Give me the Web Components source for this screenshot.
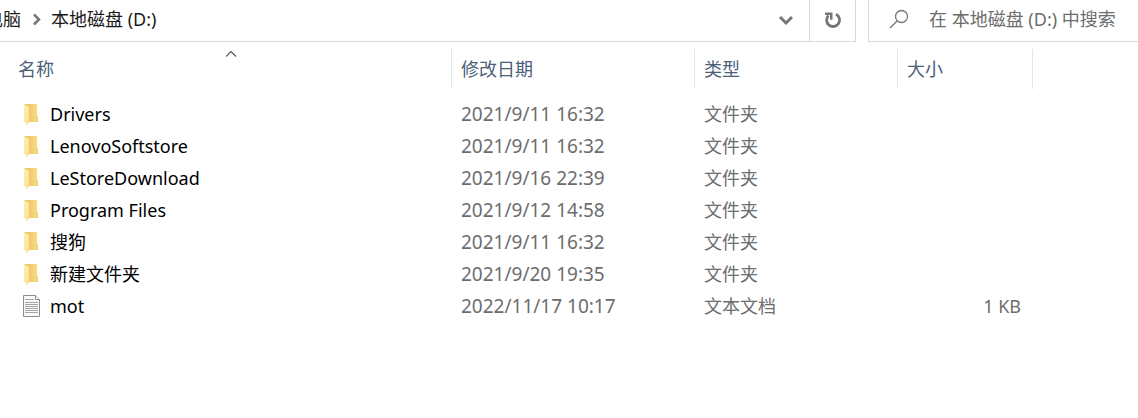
<!DOCTYPE html>
<html lang="zh-CN">
<head>
<meta charset="utf-8">
<meta name="viewport" content="width=device-width, initial-scale=1">
<title>本地磁盘 (D:)</title>
<style>
  body {
    margin: 0;
    background: #fff;
    color: #000;
    font: 18px/32px "Noto Sans", "Noto Sans CJK SC", sans-serif;
  }
</style>
</head>
<body>
<explorer-window>
  <address-bar slot="address" parent="电脑" current="本地磁盘 (D:)"></address-bar>
  <search-box slot="search" hint="在 本地磁盘 (D:) 中搜索"></search-box>
  <file-list></file-list>
</explorer-window>

<script>
(() => {
  'use strict';

  const ICONS = {
    folder: `
      <svg width="20" height="24" viewBox="0 0 20 24" aria-hidden="true">
        <defs>
          <linearGradient id="back" x1="0" x2="1">
            <stop offset=".3" stop-color="#ecc768"/><stop offset="1" stop-color="#fbdf8a"/>
          </linearGradient>
          <linearGradient id="front" x1="0" x2="1" y1="0" y2="1">
            <stop offset="0" stop-color="#ffeebb"/><stop offset="1" stop-color="#fddf8b"/>
          </linearGradient>
        </defs>
        <path d="M2 2h13v11l1 1v6H2z" fill="url(#back)"/>
        <path d="M14 14h2v6h-2z" fill="#f6d178"/>
        <path d="M2 2l5 3v14l-1 4-4-3z" fill="url(#front)"/>
      </svg>`,
    text: `
      <svg width="20" height="24" viewBox="0 0 20 24" aria-hidden="true">
        <path d="M1.500 1.500h12l4 4v17h-16z" fill="#fafafa" stroke="#8c8c8c"/>
        <path d="M13.500 1.500v4h4" fill="#fff" stroke="#8c8c8c"/>
        <path d="M3 5.500h9M3 8.500h13M3 10.500h13M3 12.500h13M3 14.500h13M3 16.500h13M3 18.500h13" stroke="#a3a3a3"/>
      </svg>`
  };

  const FILES = [
    { name: 'Drivers', date: '2021/9/11 16:32', type: '文件夹', size: '', icon: 'folder' },
    { name: 'LenovoSoftstore', date: '2021/9/11 16:32', type: '文件夹', size: '', icon: 'folder' },
    { name: 'LeStoreDownload', date: '2021/9/16 22:39', type: '文件夹', size: '', icon: 'folder' },
    { name: 'Program Files', date: '2021/9/12 14:58', type: '文件夹', size: '', icon: 'folder' },
    { name: '搜狗', date: '2021/9/11 16:32', type: '文件夹', size: '', icon: 'folder' },
    { name: '新建文件夹', date: '2021/9/20 19:35', type: '文件夹', size: '', icon: 'folder' },
    { name: 'mot', date: '2022/11/17 10:17', type: '文本文档', size: '1 KB', icon: 'text' }
  ];

  // ---------- Window frame ----------
  class ExplorerWindow extends HTMLElement {
    constructor() {
      super();
      this.attachShadow({ mode: 'open' }).innerHTML = `
        <style>
          :host { display: block; overflow: hidden; }
          header { display: flex; gap: 12px; }
          slot[name="address"]::slotted(*) { flex: 1; min-width: 0; }
          slot[name="search"]::slotted(*) { flex: 0 0 270px; min-width: 0; }
          main { overflow-x: auto; padding-top: 7px; }
        </style>
        <header>
          <slot name="address"></slot>
          <slot name="search"></slot>
        </header>
        <main><slot></slot></main>
      `;
    }
  }

  // ---------- Address bar ----------
  class AddressBar extends HTMLElement {
    constructor() {
      super();
      this.attachShadow({ mode: 'open' });
    }

    connectedCallback() {
      this.shadowRoot.innerHTML = `
        <style>
          :host {
            display: flex; box-sizing: border-box; height: 42px;
            border-bottom: 1px solid #d9d9d9; border-right: 1px solid #d9d9d9;
          }
          nav {
            flex: 1; min-width: 0; display: flex; align-items: center;
            overflow: hidden; white-space: nowrap; padding-bottom: 4px;
          }
          a { color: #1a1a1a; text-decoration: none; }
          a:first-child { margin-left: -15px; }
          nav svg { flex: none; margin: 0 8px; }
          button {
            display: grid; place-items: center; width: 46px; padding: 0 0 2px;
            border: 0; background: none; color: #767676;
          }
          button:last-child { border-left: 1px solid #d9d9d9; }
          button:hover { background-color: #e5f3ff; }
        </style>
        <nav aria-label="路径">
          <a href="#parent">${this.getAttribute('parent')}</a>
          <svg width="14" height="14" viewBox="0 0 14 14" fill="none" stroke="#767676" stroke-width="2.500" aria-hidden="true"><path d="M5 2.500l5 5-5 5"/></svg>
          <a href="#current">${this.getAttribute('current')}</a>
        </nav>
        <button type="button" aria-label="历史记录">
          <svg width="16" height="16" viewBox="0 0 16 16" fill="none" stroke="currentColor" stroke-width="3" aria-hidden="true"><path d="M2 5l6 6 6-6"/></svg>
        </button>
        <button type="button" aria-label="刷新">
          <svg width="18" height="18" viewBox="0 0 18 18" aria-hidden="true">
            <path d="M12 3.200A6.500 6.500 0 1 1 4.500 4.400" fill="none" stroke="currentColor" stroke-width="2.800"/>
            <path d="M1 1.500h7.500v7.200H6V4H1z" fill="currentColor"/>
          </svg>
        </button>
      `;
    }
  }

  // ---------- Search box ----------
  class SearchBox extends HTMLElement {
    constructor() {
      super();
      this.attachShadow({ mode: 'open' });
    }

    connectedCallback() {
      const hint = this.getAttribute('hint');
      this.shadowRoot.innerHTML = `
        <style>
          :host {
            display: flex; align-items: center; box-sizing: border-box; height: 42px;
            border-left: 1px solid #d9d9d9; border-bottom: 1px solid #d9d9d9;
          }
          label { flex: none; display: flex; padding: 0 20px 4px; }
          input {
            flex: 1; min-width: 0; padding: 0 0 4px; border: 0; outline: 0;
            background: none; color: #000; font: inherit;
          }
          input::placeholder { color: #6d6d6d; opacity: 1; }
        </style>
        <label for="q" aria-label="${hint}">
          <svg width="20" height="20" viewBox="0 0 20 20" fill="none" stroke="#767676" stroke-width="1.300" aria-hidden="true">
            <circle cx="12.500" cy="7.500" r="6"/><path d="M8.300 11.700L1 19"/>
          </svg>
        </label>
        <input id="q" type="text" placeholder="${hint}">
      `;
    }
  }

  // ---------- File icon ----------
  class FileIcon extends HTMLElement {
    constructor() {
      super();
      this.attachShadow({ mode: 'open' });
    }

    connectedCallback() {
      this.shadowRoot.innerHTML = `
        <style>
          :host { display: block; flex: none; }
          svg { display: block; }
        </style>
        ${ICONS[this.getAttribute('kind')] || ''}
      `;
    }
  }

  // ---------- Details list ----------
  class FileList extends HTMLElement {
    constructor() {
      super();
      this.attachShadow({ mode: 'open' });
    }

    connectedCallback() { this.render(); }

    render() {
      this.shadowRoot.innerHTML = `
        <style>
          :host { display: block; }
          table { width: 100%; min-width: 1040px; table-layout: fixed; border-collapse: separate; border-spacing: 0; }
          .name { width: 452px; }
          .date { width: 243px; }
          .type { width: 203px; }
          .size { width: 135px; }
          th, td { box-sizing: border-box; padding: 0; text-align: left; font-weight: 400; white-space: nowrap; }
          th { position: relative; height: 40px; border-right: 1px solid #e5e5e5; }
          th:last-child { border: 0; }
          th button {
            display: block; width: 100%; height: 40px; padding: 0 9px;
            border: 0; background: none; color: #4c607a; font: inherit; text-align: left;
          }
          th:first-child button { padding-left: 18px; }
          th button:hover { background: #d9ebf9; }
          .sort { position: absolute; top: 1px; left: 50%; }
          tbody::before { content: ""; display: block; height: 9px; }
          td { height: 32px; padding: 0 12px 0 9px; color: #6d6d6d; }
          td:first-child { padding-left: 22px; }
          td:nth-child(2) { font-size: 19px; }
          td:nth-child(4) { text-align: right; }
          tbody tr:hover { background: #e5f3ff; }
          a { display: flex; align-items: center; gap: 8px; color: #000; text-decoration: none; }
        </style>
        <table>
          <colgroup>
            <col class="name"><col class="date"><col class="type"><col class="size"><col>
          </colgroup>
          <thead>
            <tr>
              <th aria-sort="ascending">
                <button type="button">名称</button>
                <svg class="sort" width="12" height="8" viewBox="0 0 12 8" fill="none" stroke="#555" stroke-width="1.200" aria-hidden="true"><path d="M0 6.500l5-5 5 5"/></svg>
              </th>
              <th><button type="button">修改日期</button></th>
              <th><button type="button">类型</button></th>
              <th><button type="button">大小</button></th>
              <th></th>
            </tr>
          </thead>
          <tbody>
            ${FILES.map(f => `
              <tr>
                <td><a href="#${encodeURIComponent(f.name)}"><file-icon kind="${f.icon}"></file-icon><span>${f.name}</span></a></td>
                <td>${f.date}</td>
                <td>${f.type}</td>
                <td>${f.size}</td>
                <td></td>
              </tr>`).join('')}
          </tbody>
        </table>
      `;
    }
  }

  customElements.define('explorer-window', ExplorerWindow);
  customElements.define('address-bar', AddressBar);
  customElements.define('search-box', SearchBox);
  customElements.define('file-icon', FileIcon);
  customElements.define('file-list', FileList);
})();
</script>
</body>
</html>
